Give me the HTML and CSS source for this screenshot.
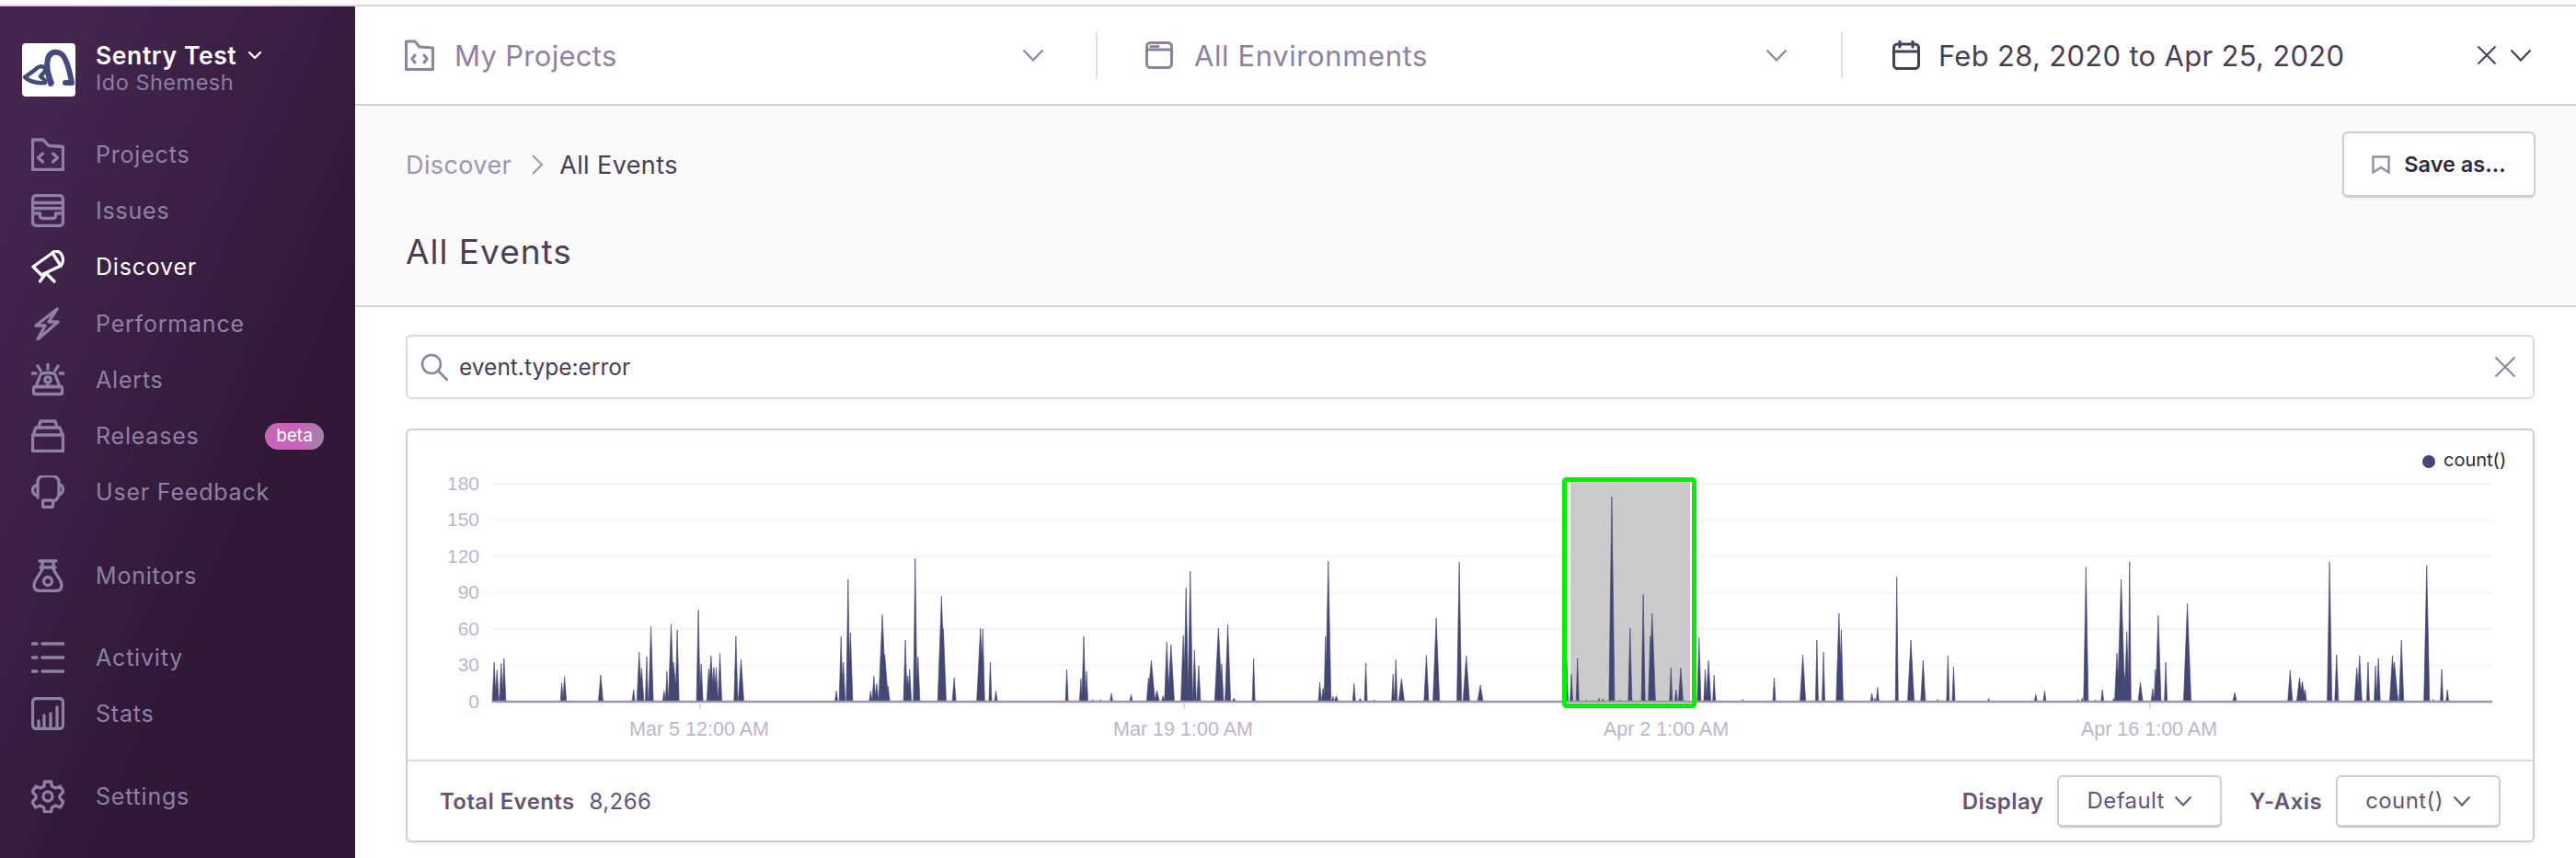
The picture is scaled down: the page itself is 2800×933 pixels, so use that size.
FILE: index.html
```html
<!DOCTYPE html>
<html lang="en">
<head>
<meta charset="utf-8">
<title>Discover - All Events</title>
<link rel="stylesheet" href="styles.css">
</head>
<body>
<div class="app">
  <aside class="sidebar">
    <div class="org">
      <svg class="org-logo" viewBox="0 0 58 58"><rect width="58" height="58" rx="4" fill="#fff"/><g fill="none" stroke="#434a7c" stroke-linecap="round" stroke-linejoin="round"><path stroke-width="6" d="M31 44C28 34 26 24 28 17C30 9 38 8 43 12C49 17 52 32 54 43L47 43"/><path stroke-width="4.500" d="M3 37L14 29C17 25 22 24 25 27C27 31 21 34 20 36C22 38 26 40 25 43C16 44 9 42 3 37Z"/><path stroke-width="4" d="M25 27C31 31 30 38 33 43"/></g></svg>
      <div class="org-text">
        <div class="org-name">Sentry Test <svg class="org-caret" viewBox="0 0 16 10"><path d="M2 2l6 6 6-6" fill="none" stroke="#fff" stroke-width="2.400" stroke-linecap="round" stroke-linejoin="round"/></svg></div>
        <div class="org-user">Ido Shemesh</div>
      </div>
    </div>
    <nav class="nav nav-main">
      <a class="nav-item"><svg class="nav-icon" viewBox="0 0 36 36"><path d="M1.500 2v32.500h33V9.500L19 8.500 13 2z"/><path d="M12.500 17l-5 4.500 5 4.500M23.500 17l5 4.500-5 4.500"/></svg><span>Projects</span></a>
      <a class="nav-item"><svg class="nav-icon" viewBox="0 0 36 36"><rect x="1.500" y="1.500" width="33" height="33" rx="4"/><path d="M1.500 9.500h33M1.500 15.500h33M1.500 21h8v2.500c0 2 1 3 3 3h11c2 0 3-1 3-3V21h8.500"/></svg><span>Issues</span></a>
      <a class="nav-item active"><svg class="nav-icon" viewBox="0 0 36 36"><path d="M2 18L23 3l9 14-21 10z"/><path d="M23 3c3-3 8-2 10 2 2 4 2 9-1 12"/><path d="M16 25L9.500 34M16 25l9 9"/></svg><span>Discover</span></a>
      <a class="nav-item"><svg class="nav-icon" viewBox="0 0 36 36"><path d="M28 2L5 20h10L7 35l22-19H19l9-14z"/></svg><span>Performance</span></a>
      <a class="nav-item"><svg class="nav-icon" viewBox="0 0 36 36"><path d="M5 25.500h26l-5-13c-2-3-14-3-16 0z"/><rect x="2.500" y="25.500" width="31" height="8" rx="1.500"/><circle cx="18" cy="18" r="3.200"/><path d="M18 21v4M18 1v5M7 3l3 5M29 3l-3 5M0 11h5M31 11h5"/></svg><span>Alerts</span></a>
      <a class="nav-item"><svg class="nav-icon" viewBox="0 0 36 36"><path d="M10 2h16l2 7H8zM5 9h26l3 8H2zM1.500 17h33v17.500h-33z"/></svg><span>Releases</span><span class="beta">beta</span></a>
      <a class="nav-item"><svg class="nav-icon" viewBox="0 0 36 36"><path d="M7 24V7c0-4 3-6.500 6-6.500h10c3 0 7 2.500 7 6.500v12c0 5-3 9-7 9M7 10C3 11 1.500 13 1.500 16S4 22 7 22M30 10c3 0 4.500 3 4.500 5S33 21 30 21"/><rect x="12.500" y="27" width="11" height="7.500" rx="1.500"/></svg><span>User Feedback</span></a>
    </nav>
    <nav class="nav nav-mid">
      <a class="nav-item"><svg class="nav-icon" viewBox="0 0 36 36"><path d="M9 2h18M12 2v8.500C10 16 3 23 3 28c0 4 2 6.500 6 6.500h18c4 0 6-2.500 6-6.500 0-5-7-12-9-17.500V2M10 9h16"/><circle cx="18" cy="24" r="4.500"/></svg><span>Monitors</span></a>
    </nav>
    <nav class="nav">
      <a class="nav-item"><svg class="nav-icon" viewBox="0 0 36 36"><path d="M0 3h6M0 18h6M0 33h6M12 3h24M12 18h24M12 33h24"/></svg><span>Activity</span></a>
      <a class="nav-item"><svg class="nav-icon" viewBox="0 0 36 36"><rect x="1.500" y="1.500" width="33" height="33" rx="4"/><path d="M8 34V26M14 34V20M21 34V18M28 34V11"/></svg><span>Stats</span></a>
    </nav>
    <nav class="nav">
      <a class="nav-item"><svg class="nav-icon" viewBox="0 0 36 36"><path d="M14.500 2h7l1 5 4 2 5-2 3.500 6-4 4v3l4 4-3.500 6-5-2-4 2-1 5h-7l-1-5-4-2-5 2-3.500-6 4-4v-3l-4-4L5 7l5 2 4-2z"/><circle cx="18" cy="18" r="5"/></svg><span>Settings</span></a>
    </nav>
  </aside>
  <main class="main">
    <header class="topbar">
      <div class="selector sel-project">
        <svg class="top-icon muted" viewBox="0 0 32 34"><path d="M1.500 2v30.500h29V9L16 8 11 2z"/><path d="M11 17l-3 4 3 4M21 17l3 4-3 4"/></svg>
        <span class="sel-label muted-text">My Projects</span>
        <svg class="chev muted" viewBox="0 0 24 14"><path d="M1.500 1.500L12 12.500 22.500 1.500"/></svg>
      </div>
      <div class="selector sel-env">
        <svg class="top-icon muted" viewBox="0 0 30 30"><rect x="1.500" y="1.500" width="27" height="27" rx="4"/><path d="M1.500 9h27M6 5.500h3M11 5.500h3"/></svg>
        <span class="sel-label muted-text">All Environments</span>
        <svg class="chev muted" viewBox="0 0 24 14"><path d="M1.500 1.500L12 12.500 22.500 1.500"/></svg>
      </div>
      <div class="selector sel-date">
        <svg class="top-icon dark" viewBox="0 0 30 32"><rect x="1.500" y="4" width="27" height="26.500" rx="4"/><path d="M1.500 12h27M8 1v6M22 1v6"/></svg>
        <span class="sel-label dark-text">Feb 28, 2020 to Apr 25, 2020</span>
        <svg class="close dark" viewBox="0 0 22 22"><path d="M1.500 1.500l19 19M20.500 1.500l-19 19"/></svg>
        <svg class="chev dark" viewBox="0 0 24 14"><path d="M1.500 1.500L12 12.500 22.500 1.500"/></svg>
      </div>
    </header>
    <section class="page-head">
      <div class="head-left">
        <div class="crumbs"><span class="crumb">Discover</span><svg class="crumb-sep" viewBox="0 0 14 24"><path d="M2 2l10 10L2 22"/></svg><span class="crumb-cur">All Events</span></div>
        <h1 class="title">All Events</h1>
      </div>
      <button class="save"><svg class="save-icon" viewBox="0 0 20 20"><path d="M1.500 1.500h17v17L10 13 1.500 18.500z"/></svg>Save as...</button>
    </section>
    <section class="content">
      <div class="search">
        <svg class="search-icon" viewBox="0 0 30 30"><circle cx="12" cy="12" r="10"/><path d="M19.500 19.500L29 29"/></svg>
        <span class="search-text">event.type:error</span>
        <svg class="search-x" viewBox="0 0 24 24"><path d="M1.500 1.500l21 21M22.500 1.500l-21 21"/></svg>
      </div>
      <div class="card">
        <svg class="chart" viewBox="443 468 2310 358">
          <g class="grid"><path d="M535 526H2709M535 565.500H2709M535 605H2709M535 644.500H2709M535 684H2709M535 723.500H2709"/></g>
          <rect class="brush-fill" x="1707" y="524" width="130" height="239"/>
          <g class="ylab">
            <text x="521" y="532.500">180</text><text x="521" y="572">150</text><text x="521" y="611.500">120</text><text x="521" y="651">90</text><text x="521" y="690.500">60</text><text x="521" y="730">30</text><text x="521" y="769.500">0</text>
          </g>
          <g class="xlab">
            <text x="760" y="800">Mar 5 12:00 AM</text><text x="1286" y="800">Mar 19 1:00 AM</text><text x="1811" y="800">Apr 2 1:00 AM</text><text x="2336" y="800">Apr 16 1:00 AM</text>
          </g>
          <path class="ticks" d="M761 765v6M1287 765v6M1812 765v6M2337 765v6"/>
          <path class="spikes" transform="translate(430 480) scale(.5102 .33333)" d="M206 848L210 720L214 848ZM212 848L216 745L220 848ZM221 848L225 724L229 848ZM227 848L231 708L235 848ZM351 848L354 787L357 848ZM356 848L360 767L364 848ZM432 848L437 762L442 848ZM504 848L507 810L510 848ZM514 848L519 687L524 848ZM519 848L524 740L529 848ZM532 848L535 702L538 848ZM539 848L544 604L549 848ZM569 848L572 814L575 848ZM575 848L578 750L581 848ZM581 848L587 597L593 848ZM584 848L592 720L600 848ZM596 848L600 615L604 848ZM641 848L645 549L649 848ZM647 848L651 726L655 848ZM663 848L667 742L671 848ZM666 848L672 699L678 848ZM673 848L678 737L683 848ZM679 848L683 737L687 848ZM687 848L691 691L695 848ZM721 848L725 636L729 848ZM730 848L736 711L742 848ZM936 848L939 814L942 848ZM945 848L949 636L953 848ZM950 848L954 720L958 848ZM960 848L964 450L968 848ZM964 848L969 624L974 848ZM1009 848L1012 814L1015 848ZM1015 848L1019 766L1023 848ZM1021 848L1025 790L1029 848ZM1029 848L1037 565L1045 848ZM1034 848L1042 695L1050 848ZM1045 848L1049 798L1053 848ZM1082 848L1086 648L1090 848ZM1087 848L1091 765L1095 848ZM1091 848L1095 743L1099 848ZM1103 848L1107 382L1111 848ZM1109 848L1113 703L1117 848ZM1155 848L1163 505L1171 848ZM1161 848L1167 610L1173 848ZM1186 848L1190 771L1194 848ZM1238 848L1246 610L1254 848ZM1247 848L1251 612L1255 848ZM1264 848L1267 720L1270 848ZM1276 848L1279 814L1282 848ZM1427 848L1430 744L1433 848ZM1457 848L1460 774L1463 848ZM1462 848L1466 636L1470 848ZM1469 848L1472 750L1475 848ZM1483 848L1485 842L1487 848ZM1500 848L1502 842L1504 848ZM1522 848L1525 822L1528 848ZM1564 848L1567 826L1570 848Z"/>
          <path class="spikes" transform="translate(1230 480) scale(.5102 .33333)" d="M32 848L36 771L40 848ZM34 848L42 715L50 848ZM49 848L54 813L59 848ZM64 848L67 830L70 848ZM70 848L75 655L80 848ZM77 848L84 663L91 848ZM105 848L110 633L115 848ZM111 848L116 477L121 848ZM120 848L125 423L130 848ZM130 848L134 681L138 848ZM139 848L143 731L147 848ZM177 848L185 609L193 848ZM188 848L192 726L196 848ZM199 848L205 597L211 848ZM214 848L218 838L222 848ZM257 848L260 708L263 848ZM398 848L401 786L404 848ZM404 848L408 805L412 848ZM410 848L413 636L416 848ZM413 848L419 390L425 848ZM426 848L429 832L432 848ZM432 848L436 830L440 848ZM471 848L474 790L477 848ZM484 848L487 838L490 848ZM496 848L499 723L502 848ZM515 848L517 843L519 848ZM554 848L557 759L560 848ZM560 848L563 712L566 848ZM569 848L575 774L581 848ZM623 848L628 699L633 848ZM642 848L649 576L656 848ZM693 848L698 394L703 848ZM706 848L713 699L720 848ZM737 848L743 795L749 848ZM924 848L927 708L930 848ZM934 848L937 759L940 848ZM947 848L950 708L953 848ZM966 848L968 843L970 848ZM994 848L996 838L998 848ZM1002 848L1004 840L1006 848ZM1017 848L1023 180L1029 848ZM1039 848L1041 843L1043 848ZM1058 848L1062 609L1066 848ZM1086 848L1090 498L1094 848ZM1101 848L1105 635L1109 848ZM1102 848L1109 561L1116 848ZM1146 848L1149 738L1152 848ZM1157 848L1160 810L1163 848ZM1165 848L1170 738L1175 848ZM1205 848L1209 640L1213 848ZM1219 848L1222 744L1225 848ZM1224 848L1229 715L1234 848ZM1238 848L1241 762L1244 848ZM1299 848L1302 842L1305 848ZM1366 848L1369 771L1372 848ZM1424 848L1430 696L1436 848ZM1457 848L1460 648L1463 848ZM1471 848L1474 687L1477 848ZM1501 848L1507 561L1513 848ZM1508 848L1512 615L1516 848Z"/>
          <path class="spikes" transform="translate(2000 480) scale(.5102 .33333)" d="M65 848L68 822L71 848ZM72 848L74 838L76 848ZM77 848L80 802L83 848ZM118 848L121 442L124 848ZM144 848L151 648L158 848ZM172 848L177 714L182 848ZM205 848L208 842L211 848ZM227 848L230 699L233 848ZM239 848L242 735L245 848ZM315 848L317 838L319 848ZM414 848L417 826L420 848ZM433 848L436 814L439 848ZM505 848L507 842L509 848ZM514 848L516 838L518 848ZM519 848L524 411L529 848ZM542 848L544 843L546 848ZM556 848L559 810L562 848ZM581 848L583 838L585 848ZM585 848L590 690L595 848ZM591 848L599 450L607 848ZM599 848L605 750L611 848ZM606 848L611 621L616 848ZM614 848L617 393L620 848ZM635 848L640 786L645 848ZM663 848L666 807L669 848ZM669 848L672 744L675 848ZM672 848L678 568L684 848ZM691 848L694 720L697 848ZM732 848L740 528L748 848ZM837 848L841 819L845 848ZM954 848L959 747L964 848ZM973 848L979 771L985 848ZM979 848L985 783L991 848ZM988 848L991 810L994 848ZM1038 848L1043 393L1048 848ZM1054 848L1058 696L1062 848ZM1096 848L1101 738L1106 848ZM1102 848L1107 699L1112 848ZM1122 848L1125 720L1128 848ZM1138 848L1141 732L1144 848ZM1143 848L1147 708L1151 848ZM1171 848L1177 699L1183 848ZM1173 848L1181 720L1189 848ZM1191 848L1196 648L1201 848ZM1244 848L1250 405L1256 848ZM1262 848L1264 842L1266 848ZM1279 848L1282 743L1285 848ZM1291 848L1294 810L1297 848Z"/>
          <path class="baseline" d="M535 763H2709"/>
          <rect class="brush-box" x="1700.500" y="521.500" width="141" height="246" rx="2"/>
          <circle class="legend-dot" cx="2640" cy="502" r="7"/>
          <text class="legend-text" x="2656" y="507">count()</text>
        </svg>
        <div class="card-foot">
          <div class="total"><b>Total Events</b><span>8,266</span></div>
          <div class="opts">
            <b class="opt-label">Display</b>
            <button class="opt-btn">Default<svg class="opt-chev" viewBox="0 0 20 12"><path d="M1.500 1.500L10 10.500l8.500-9"/></svg></button>
            <b class="opt-label opt-y">Y-Axis</b>
            <button class="opt-btn">count()<svg class="opt-chev" viewBox="0 0 20 12"><path d="M1.500 1.500L10 10.500l8.500-9"/></svg></button>
          </div>
        </div>
      </div>
    </section>
  </main>
</div>
</body>
</html>
```
FILE: styles.css
```css
* { box-sizing: border-box; }
html, body { margin: 0; height: 933px; overflow: hidden; background: #fff; }
body { padding-top: 5px; font-family: Inter, "Noto Sans", sans-serif; color: #302839; }
.app { display: flex; height: 928px; border-top: 2px solid #d9d3e2; }

.sidebar { width: 386px; flex: none; background: linear-gradient(294deg, #2f1937 35%, #452650 92%); display: flex; flex-direction: column; padding: 40px 0 0 34px; }
.org { display: flex; align-items: center; margin-left: -10px; height: 58px; }
.org-logo { width: 58px; height: 58px; flex: none; }
.org-text { margin-left: 22px; margin-top: -2px; }
.org-name { font-size: 26.500px; letter-spacing: .6px; font-weight: 600; color: #fff; line-height: 30px; display: flex; align-items: center; gap: 12px; white-space: nowrap; }
.org-caret { width: 16px; height: 10px; }
.org-user { font-size: 23.500px; letter-spacing: .5px; color: #8c7ea0; line-height: 30px; white-space: nowrap; }
.nav { display: flex; flex-direction: column; margin-bottom: 29px; }
.nav-main { margin-top: 32px; }
.nav-mid { margin-bottom: 27.500px; }
.nav-item { height: 61.300px; display: flex; align-items: center; color: #8f81a3; font-size: 25px; letter-spacing: .8px; }
.nav-item.active { color: #fff; }
.nav-icon { width: 36px; height: 36px; flex: none; margin-right: 34px; fill: none; stroke: currentColor; stroke-width: 3.300; stroke-linecap: round; stroke-linejoin: round; }
.beta { margin-left: auto; margin-right: 34px; width: 64px; height: 29px; border-radius: 14.500px; background: linear-gradient(90deg, #c864b8 60%, #9d86a8); color: #fff; font-size: 19px; letter-spacing: 0; line-height: 27px; text-align: center; }

.main { flex: 1; min-width: 0; display: flex; flex-direction: column; }
.topbar { height: 108px; flex: none; display: flex; align-items: center; border-bottom: 2px solid #d1cadb; background: #fff; }
.selector { display: flex; align-items: center; height: 50px; }
.sel-project { width: 807px; padding: 0 56px 0 54px; border-right: 2px solid #e2dee8; }
.sel-env { width: 810px; padding: 0 58px 0 52px; border-right: 2px solid #e2dee8; }
.sel-date { flex: 1; padding: 0 48px 0 54px; }
.top-icon { fill: none; stroke-width: 3; stroke-linecap: round; stroke-linejoin: round; flex: none; }
.sel-project .top-icon { width: 32px; height: 34px; }
.sel-env .top-icon { width: 30px; height: 30px; }
.sel-date .top-icon { width: 30px; height: 32px; }
.muted { stroke: #8f81a3; }
.dark { stroke: #4a3e56; }
.sel-label { margin-left: 22px; font-size: 31px; letter-spacing: .3px; flex: 1; white-space: nowrap; }
.sel-env .sel-label { margin-left: 23px; letter-spacing: .6px; }
.sel-date .sel-label { margin-left: 20px; }
.muted-text { color: #8f81a3; }
.dark-text { color: #4a3e56; }
.chev { width: 24px; height: 14px; fill: none; stroke-width: 2.200; flex: none; }
.close { width: 22px; height: 22px; fill: none; stroke-width: 2; flex: none; margin-right: 14px; }

.page-head { height: 219px; flex: none; background: #fafafa; border-bottom: 2px solid #d8d2df; display: flex; justify-content: space-between; padding: 28px 44px 0 55px; }
.crumbs { display: flex; align-items: center; height: 72px; font-size: 27px; letter-spacing: .4px; }
.crumb { color: #a093b0; }
.crumb-sep { width: 14px; height: 24px; margin: 0 17px 0 21px; fill: none; stroke: #a093b0; stroke-width: 2; }
.crumb-cur { color: #4a3e56; }
.title { margin: 37px 0 0; font-size: 37px; letter-spacing: 1px; font-weight: 400; color: #4a3e56; line-height: 44px; }
.save { width: 210px; height: 72px; background: #fff; border: 2px solid #d1cadb; border-bottom-width: 3px; border-radius: 6px; font: 600 23.500px Inter, "Noto Sans", sans-serif; color: #302839; display: flex; align-items: center; justify-content: center; gap: 15px; box-shadow: 0 2px 3px rgba(0,0,0,.05); padding: 0; }
.save-icon { width: 20px; height: 20px; fill: none; stroke: #9c8fac; stroke-width: 2.500; }

.content { padding: 30px 45px 0 55px; display: flex; flex-direction: column; gap: 32px; }
.search { height: 70px; border: 2px solid #dcd8e3; border-radius: 6px; display: flex; align-items: center; padding: 0 18px 0 14px; background: #fff; }
.search-icon { width: 30px; height: 30px; fill: none; stroke: #8f81a3; stroke-width: 2.500; stroke-linecap: round; flex: none; }
.search-text { margin-left: 12px; font-size: 24.500px; color: #4a3e56; flex: 1; }
.search-x { width: 24px; height: 24px; fill: none; stroke: #8f81a3; stroke-width: 2; flex: none; }

.card { height: 450px; border: 2px solid #d1cadb; border-radius: 6px; background: #fff; display: flex; flex-direction: column; box-shadow: 0 2px 3px rgba(0,0,0,.05); }
.chart { display: block; width: 2310px; height: 358px; flex: none; }
.grid path { stroke: #f5f4f6; stroke-width: 2; fill: none; }
.brush-fill { fill: #cbcbcb; }
.ylab text { font: 21px "Liberation Sans", Arial, sans-serif; fill: #bdb5c9; text-anchor: end; }
.xlab text { font: 21.500px "Liberation Sans", Arial, sans-serif; fill: #bdb5c9; text-anchor: middle; }
.ticks { stroke: #bdb5c9; stroke-width: 1; fill: none; }
.spikes { fill: #444674; stroke: #444674; stroke-width: 1.500; }
.baseline { stroke: #9d94ab; stroke-width: 2.500; fill: none; }
.brush-box { fill: none; stroke: #00f000; stroke-width: 5; }
.legend-dot { fill: #444674; }
.legend-text { font: 20px Inter, "Noto Sans", sans-serif; fill: #302839; }

.card-foot { flex: 1; border-top: 2px solid #dcd7e3; display: flex; justify-content: space-between; align-items: center; padding: 0 35px; color: #645574; font-size: 24px; letter-spacing: .4px; }
.total { display: flex; gap: 16px; }
.total b, .opt-label { font-weight: 600; }
.opts { display: flex; align-items: center; gap: 15px; }
.opt-y { margin-left: 15px; }
.opt-btn { width: 179px; height: 57px; background: #fff; border: 2px solid #d1cadb; border-bottom-width: 3px; border-radius: 6px; font: 400 24px Inter, "Noto Sans", sans-serif; letter-spacing: .4px; color: #645574; display: flex; align-items: center; justify-content: center; gap: 10px; padding: 0; box-shadow: 0 2px 3px rgba(0,0,0,.05); }
.opt-chev { width: 20px; height: 12px; fill: none; stroke: #645574; stroke-width: 2; }
```
